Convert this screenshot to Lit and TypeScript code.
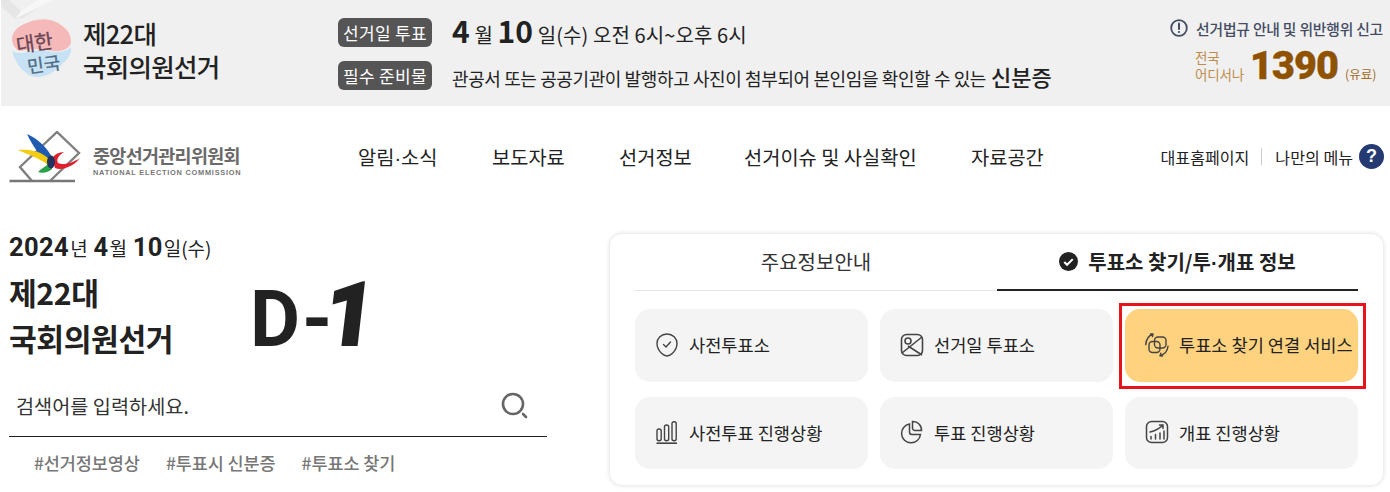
import { LitElement, html, css } from "lit";
import { customElement } from "lit/decorators.js";

@customElement("app-root")
export class AppRoot extends LitElement {
  static styles = css`
    :host { display: block; width: 1390px; height: 492px; overflow: hidden; background: #fff; color: #222; font-family: "Noto Sans CJK KR", "Noto Sans", sans-serif; }
    * { box-sizing: border-box; }
    .banner { height: 106px; background: #f0f0f0; margin-left: 1px; display: flex; position: relative; overflow: hidden; }
    .stripe { position: absolute; left: 0; top: 0; }
    .flag { margin: 18px 0 0 8px; width: 64px; height: 62px; position: relative; }
    .bt { margin: 16px 0 0 10px; width: 255px; font-size: 25.500px; font-weight: 500; line-height: 33px; letter-spacing: -0.7px; }
    .bmid { display: flex; flex-direction: column; gap: 14px; margin-top: 18px; width: 830px; }
    .brow { display: flex; align-items: center; height: 29px; }
    .tag { background: #555; color: #fff; border-radius: 6px; font-size: 17px; letter-spacing: .3px; width: 94px; height: 28.500px; display: flex; align-items: center; justify-content: center; margin-right: 20px; white-space: nowrap; }
    .l1 { font-size: 20px; display: flex; align-items: baseline; white-space: pre; letter-spacing: .1px; }
    .l1 b { font-size: 30px; font-weight: 700; line-height: 28px; }
    .l2 { font-size: 18px; letter-spacing: -0.39px; display: flex; align-items: baseline; white-space: nowrap; }
    .l2 b { font-size: 22px; font-weight: 500; margin-left: 5px; letter-spacing: 0; }
    .bright { position: absolute; right: 7px; top: 17px; display: flex; flex-direction: column; }
    .report { display: flex; align-items: center; gap: 8px; font-size: 14.800px; color: #444c63; letter-spacing: -0.2px; font-weight: 500; height: 22px; white-space: nowrap; }
    .phone { display: flex; align-items: center; margin: 6px 0 0 25px; color: #8f5200; }
    .ph-s { color: #c08c4c; font-size: 13.500px; line-height: 17px; width: 55px; white-space: nowrap; letter-spacing: -0.2px; }
    .ph-n { font-family: "Roboto", sans-serif; font-weight: 900; font-size: 39.500px; line-height: 42px; letter-spacing: -0.9px; -webkit-text-stroke: .4px #8f5200; }
    .ph-e { font-size: 12.500px; margin: 14px 0 0 7px; color: #a46d28; white-space: nowrap; }
    .nav { height: 104px; display: flex; align-items: center; position: relative; }
    .logo { margin: 0 0 0 9px; width: 72px; height: 54px; }
    .org { margin: 4px 0 0 12px; width: 260px; }
    .org-k { font-size: 18.500px; line-height: 22px; font-weight: 700; color: #6a6a6a; letter-spacing: -0.7px; white-space: nowrap; }
    .org-e { font-family: "Liberation Sans", sans-serif; font-size: 7.400px; line-height: 9px; margin-top: 2px; color: #777; letter-spacing: .75px; font-weight: 700; white-space: nowrap; }
    .menu { display: grid; grid-template-columns: 134px 127px 125px 227px auto; font-size: 19.800px; margin: -3px 0 0 5px; white-space: nowrap; }
    .d { font-family: "Liberation Sans", sans-serif; }
    .util { position: absolute; right: 6px; top: 38px; display: flex; align-items: center; font-size: 16.100px; white-space: nowrap; }
    .sep { width: 1px; height: 17px; background: #ccc; margin: 0 13px 0 12px; }
    .q { width: 25px; height: 25px; border-radius: 50%; background: #253a73; color: #fff; font-weight: 700; font-size: 18px; display: flex; align-items: center; justify-content: center; margin-left: 6px; font-family: "Liberation Sans", sans-serif; }
    .main { display: flex; }
    .left { width: 538px; margin-left: 9px; }
    .date { font-size: 19px; line-height: 26px; height: 26px; margin-top: 24px; display: flex; align-items: baseline; white-space: pre; word-spacing: 1.500px; }
    .date b { font-size: 25.500px; font-weight: 700; font-family: "Roboto", sans-serif; letter-spacing: .4px; }
    .date b + span { margin-left: 1px; }
    .hero { display: flex; height: 92px; margin-top: 9px; }
    .ht { width: 241px; font-size: 30.200px; line-height: 46px; font-weight: 700; letter-spacing: -0.4px; white-space: nowrap; }
    .dday { font-family: "Roboto", sans-serif; font-size: 77px; font-weight: 700; line-height: 77px; color: #222; display: flex; height: 77px; margin-top: 13px; letter-spacing: 2px; }
    .dday i { display: block; font-style: italic; font-weight: 900; font-size: 88px; line-height: 77px; margin: -6px 0 0 -7px; -webkit-text-stroke: 2px #222; transform: skewX(3deg); transform-origin: bottom left; }
    .search { height: 58px; margin-top: 18px; border-bottom: 1px solid #222; display: flex; align-items: center; justify-content: space-between; padding: 3px 19px 8px 7px; font-size: 19.700px; color: #333; }
    .tags { display: flex; gap: 26px; margin: 13px 0 0 25px; color: #777; font-size: 17.500px; letter-spacing: -0.1px; line-height: 25px; font-weight: 500; white-space: nowrap; }
    .panel { margin-left: 63px; margin-top: 24px; width: 773px; height: 251px; background: #fff; border-radius: 12px; box-shadow: 0 0 5px rgba(0,0,0,.16); padding: 0 25px; position: relative; }
    .tabs { display: flex; height: 57px; }
    .tab { width: 362px; display: flex; align-items: center; justify-content: center; font-size: 20px; color: #333; border-bottom: 1px solid #e6e6e6; padding-bottom: 2px; white-space: nowrap; }
    .tab.on { flex: 1; font-weight: 700; color: #222; border-bottom: 2px solid #222; gap: 10px; padding-bottom: 1px; font-size: 20px; }
    .grid { display: grid; grid-template-columns: repeat(3, 233px); grid-template-rows: 73px 72px; column-gap: 12px; row-gap: 15px; margin-top: 18px; }
    .card { background: #f4f4f4; border-radius: 15px; display: flex; align-items: center; padding: 0 0 2px 20px; gap: 10px; font-size: 17.600px; color: #222; white-space: nowrap; }
    .card.hi { background: #ffd27f; }
    svg { display: block; flex: none; }
    .hi-frame { position: absolute; left: 509px; top: 69px; width: 247px; height: 86px; border: 3px solid #e8141c; pointer-events: none; }
  `;

  render() {
    return html`
      <div class="banner">
        <svg class="stripe" width="80" height="40" viewBox="0 0 80 40"><path d="M0 6 14 19 22 18 48 0H36L20 11 8 0H0Z" fill="#e6e6e6"/><path d="M36 0 20 11 14 19 52 0Z" fill="#f7f7f7"/></svg>
        <svg class="flag" viewBox="0 0 64 62">
          <path d="M5 28C0 20 5 11 13 7 24 1 37-1 47 4c8 4 15 10 15 19 0 5-4 9-12 10-8 1-14-2-22-2-7 0-12 1-16 2-3 0-5-2-7-5Z" fill="#f6b9b9"/>
          <path d="M3 33c6 3 12 2 20 0 9-2 16 1 24 1 7 0 12-2 15-5 1 8-5 14-11 19-6 6-12 10-21 11C17 60 7 47 3 33Z" fill="#c8e2f5"/>
          <text x="7" y="33" font-size="20" fill="#6a4552" stroke="#6a4552" stroke-width=".3" font-family="Noto Sans CJK KR" transform="rotate(-8 20 25)">대한</text>
          <text x="18" y="54" font-size="18" fill="#4f6a84" stroke="#4f6a84" stroke-width=".3" font-family="Noto Sans CJK KR" transform="rotate(-8 30 45)">민국</text>
        </svg>
        <div class="bt">제22대<br />국회의원선거</div>
        <div class="bmid">
          <div class="brow"><span class="tag">선거일 투표</span><span class="l1"><b>4</b> 월 <b>10</b> 일(수) 오전 6시~오후 6시</span></div>
          <div class="brow"><span class="tag">필수 준비물</span><span class="l2">관공서 또는 공공기관이 발행하고 사진이 첨부되어 본인임을 확인할 수 있는<b>신분증</b></span></div>
        </div>
        <div class="bright">
          <div class="report">
            <svg width="18" height="18" viewBox="0 0 18 18"><circle cx="9" cy="9" r="7.800" fill="none" stroke="#444c63" stroke-width="1.800"/><path d="M9 4.500v5.500" stroke="#444c63" stroke-width="2" stroke-linecap="round"/><circle cx="9" cy="13" r="1.100" fill="#444c63"/></svg>
            <span>선거법규 안내 및 위반행위 신고</span>
          </div>
          <div class="phone"><span class="ph-s">전국<br />어디서나</span><span class="ph-n">1390</span><span class="ph-e">(유료)</span></div>
        </div>
      </div>
      <div class="nav">
        <svg class="logo" viewBox="0 0 72 54">
          <path d="M23 50 11 36 48 1 70 22 41 50" fill="none" stroke="#808080" stroke-width="2.400"/>
          <path d="M.5 50h65.500" stroke="#777" stroke-width="2.600"/>
          <path d="M18 3C29 8 38 16 44 28l-3 9C32 26 24 16 18 3Z" fill="#1f5bb0"/>
          <path d="M9 19c11-1 23 1 31 9l-1 6C30 27 20 24 9 19Z" fill="#f5cb10"/>
          <path d="M29 41c4-4 8-6 12-9l2 6c-3 3-9 5-14 3Z" fill="#2aa04b"/>
          <path d="M43 27c3-4 7-6 12-6-5 3-8 7-6 11 6 3 16-1 22-5-6 8-17 13-25 10Z" fill="#e0202c"/>
          <ellipse cx="42" cy="31" rx="4" ry="6.500" fill="#24325e"/>
        </svg>
        <div class="org">
          <div class="org-k">중앙선거관리위원회</div>
          <div class="org-e">NATIONAL ELECTION COMMISSION</div>
        </div>
        <div class="menu">
          <span>알림<span class="d">·</span>소식</span><span>보도자료</span><span>선거정보</span><span>선거이슈 및 사실확인</span><span>자료공간</span>
        </div>
        <div class="util"><span>대표홈페이지</span><i class="sep"></i><span>나만의 메뉴</span><span class="q">?</span></div>
      </div>
      <div class="main">
        <div class="left">
          <div class="date"><b>2024</b><span>년 </span><b>4</b><span>월 </span><b>10</b><span>일(수)</span></div>
          <div class="hero">
            <div class="ht">제22대<br />국회의원선거</div>
            <div class="dday">D-<i>1</i></div>
          </div>
          <div class="search"><span>검색어를 입력하세요.</span>
            <svg width="28" height="28" viewBox="0 0 28 28"><circle cx="13" cy="13" r="10" fill="none" stroke="#666" stroke-width="2.600"/><path d="M23 23l3 3" stroke="#666" stroke-width="2.600" stroke-linecap="round"/></svg>
          </div>
          <div class="tags"><span>#선거정보영상</span><span>#투표시 신분증</span><span>#투표소 찾기</span></div>
        </div>
        <div class="panel">
          <div class="tabs">
            <div class="tab">주요정보안내</div>
            <div class="tab on">
              <svg width="19" height="19" viewBox="0 0 20 20"><circle cx="10" cy="10" r="10" fill="#222"/><path d="M5.500 10.500l3 3 6-6" fill="none" stroke="#fff" stroke-width="2.200"/></svg>
              <span>투표소 찾기/투<span class="d">·</span>개표 정보</span>
            </div>
          </div>
          <div class="grid">
            <div class="card"><svg width="24" height="24" viewBox="0 0 24 24" fill="none" stroke="#444" stroke-width="1.400"><path d="M12 1c5.800 0 10 4.200 10 9.500 0 3.500-1.700 7-4.500 9.800-2 2-3.800 2.700-5.500 2.700s-3.500-.7-5.500-2.700C3.700 17.500 2 14 2 10.500 2 5.200 6.200 1 12 1Z"/><path d="m8.500 11.500 2.500 2.500 4.500-5" stroke-linecap="round" stroke-linejoin="round"/></svg><span>사전투표소</span></div>
            <div class="card"><svg width="24" height="24" viewBox="0 0 24 24" fill="none" stroke="#444" stroke-width="1.600"><rect x="1.500" y="1.500" width="21" height="21" rx="5"/><circle cx="8" cy="8" r="3"/><path d="M2 20 22 4M8 13l14 9"/></svg><span>선거일 투표소</span></div>
            <div class="card hi"><svg width="24" height="24" viewBox="0 0 24 24" fill="none" stroke="#444" stroke-width="1.400" stroke-linecap="round" stroke-linejoin="round"><rect x="4" y="8.500" width="11" height="11" rx="3.500"/><rect x="9.500" y="4" width="11.500" height="11" rx="3.500"/><path d="M.8 11.700C1 6.500 4 2.500 8 1M8 1 5.500 1M8 1 7.500 3.500M23 13.300C22.500 18 19.500 21.500 15 22.700M15 22.700l2.500.3M15 22.700l.8-2.500"/></svg><span>투표소 찾기 연결 서비스</span></div>
            <div class="card"><svg width="24" height="24" viewBox="0 0 24 24" fill="none" stroke="#444" stroke-width="1.400"><rect x="2" y="9" width="4.200" height="11.700" rx="2"/><rect x="9.500" y="5" width="4.200" height="15.700" rx="2"/><rect x="17" y="1.700" width="4.200" height="19" rx="2"/><path d="M1.500 23.300h20.500" stroke-width="1.800"/></svg><span>사전투표 진행상황</span></div>
            <div class="card"><svg width="24" height="24" viewBox="0 0 24 24" fill="none" stroke="#444" stroke-width="1.500"><path d="M9.500 4A9.500 9.500 0 1 0 20.500 14.500H12a2.500 2.500 0 0 1-2.500-2.500Z"/><path d="M12.500 1.500a8.500 8.500 0 0 1 9 9h-6.500a2.500 2.500 0 0 1-2.500-2.500Z"/></svg><span>투표 진행상황</span></div>
            <div class="card"><svg width="24" height="24" viewBox="0 0 24 24" fill="none" stroke="#444" stroke-width="1.500" stroke-linecap="round"><rect x="1.500" y="1.500" width="21" height="21" rx="5"/><path d="M6 19v-2.500M10.500 19v-4.500M15 19v-6M19 19v-8M5 12c5-1 9-3 13-7M14.500 5h3.500v3.500"/></svg><span>개표 진행상황</span></div>
          </div>
          <div class="hi-frame"></div>
        </div>
      </div>
    `;
  }
}
